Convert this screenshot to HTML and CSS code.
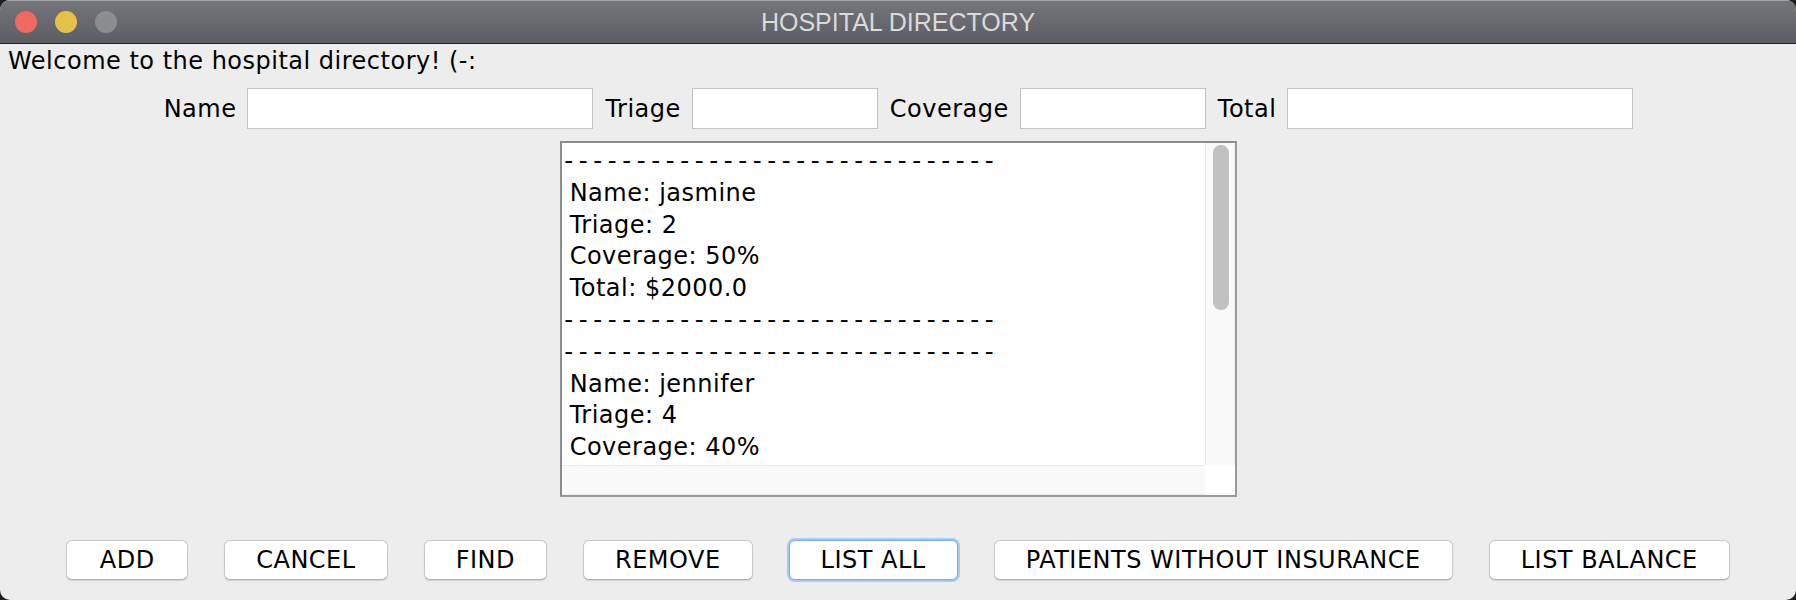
FILE: index.html
```html
<!DOCTYPE html>
<html>
<head>
<meta charset="utf-8">
<title>HOSPITAL DIRECTORY</title>
<link rel="stylesheet" href="styles.css">
</head>
<body>
<div class="window">
  <div class="titlebar">
    <div class="lights">
      <span class="light red"></span>
      <span class="light yellow"></span>
      <span class="light grey"></span>
    </div>
    <div class="title">HOSPITAL DIRECTORY</div>
  </div>
  <div class="content">
    <div class="welcome">Welcome to the hospital directory! (-:</div>
    <div class="fields">
      <span class="label">Name</span><span class="field wide"></span>
      <span class="label">Triage</span><span class="field narrow"></span>
      <span class="label">Coverage</span><span class="field narrow"></span>
      <span class="label">Total</span><span class="field wide"></span>
    </div>
    <div class="areawrap">
      <div class="textarea">
        <div class="viewport">
          <div class="line dash">------------------------------</div>
          <div class="line"> Name: jasmine</div>
          <div class="line"> Triage: 2</div>
          <div class="line"> Coverage: 50%</div>
          <div class="line"> Total: $2000.0</div>
          <div class="line dash">------------------------------</div>
          <div class="line dash">------------------------------</div>
          <div class="line"> Name: jennifer</div>
          <div class="line"> Triage: 4</div>
          <div class="line"> Coverage: 40%</div>
        </div>
        <div class="vscroll"><div class="thumb"></div></div>
        <div class="hscroll"></div>
        <div class="corner"></div>
      </div>
    </div>
    <div class="buttons">
      <button class="btn">ADD</button>
      <button class="btn">CANCEL</button>
      <button class="btn">FIND</button>
      <button class="btn">REMOVE</button>
      <button class="btn focused">LIST ALL</button>
      <button class="btn">PATIENTS WITHOUT INSURANCE</button>
      <button class="btn">LIST BALANCE</button>
    </div>
  </div>
</div>
</body>
</html>
```
FILE: styles.css
```css
html, body {
  margin: 0;
  padding: 0;
  background: #1f1f1f;
}
.window {
  width: 1796px;
  height: 600px;
  background: #ededed;
  border-radius: 10px;
  overflow: hidden;
  display: flex;
  flex-direction: column;
  font-family: "DejaVu Sans", sans-serif;
  font-size: 24px;
  letter-spacing: 0.5px;
  color: #000;
}
.titlebar {
  flex: none;
  background: linear-gradient(#74767b, #5b5d62);
  border-top: 1px solid #9fa1a5;
  border-bottom: 1px solid #1e1e1e;
  box-sizing: border-box;
  height: 44px;
  display: flex;
  align-items: center;
  justify-content: center;
  position: relative;
}
.lights {
  position: absolute;
  left: 15px;
  top: 10px;
  display: flex;
  gap: 18px;
}
.light {
  width: 22px;
  height: 22px;
  border-radius: 50%;
  display: block;
}
.red { background: #ee6a5f; }
.yellow { background: #e5c04b; }
.grey { background: #8b8d91; }
.title {
  font-family: "Liberation Sans", Arial, sans-serif;
  font-size: 25px;
  color: #dadada;
  letter-spacing: 0;
}
.content {
  flex: 1;
  display: flex;
  flex-direction: column;
}
.welcome {
  margin-top: 3px;
  padding-left: 8px;
  line-height: 28px;
  white-space: pre;
}
.fields {
  margin-top: 13px;
  display: flex;
  justify-content: center;
  align-items: center;
  gap: 11px;
}
.label {
  margin-left: 1px;
}
.field {
  height: 41px;
  box-sizing: border-box;
  background: #fff;
  border: 1px solid #c3c3c3;
  display: block;
}
.wide { width: 346px; }
.narrow { width: 186px; }
.areawrap {
  margin-top: 12px;
  display: flex;
  justify-content: center;
}
.textarea {
  width: 677px;
  height: 356px;
  box-sizing: border-box;
  border: 2px solid #8c8c8c;
  border-right-color: #9a9a9a;
  border-bottom-color: #9a9a9a;
  background: #fff;
  display: grid;
  grid-template-columns: 1fr 30px;
  grid-template-rows: 1fr 30px;
}
.viewport {
  overflow: hidden;
  padding: 3px 0 0 0;
}
.line {
  line-height: 31.8px;
  white-space: pre;
}
.line.dash {
  font-family: "Liberation Mono", monospace;
  letter-spacing: 0.1px;
}
.vscroll {
  background: #f9f9f9;
  border-left: 1px solid #e6e6e6;
  border-right: 1px solid #ededed;
  padding: 2px 0 0 7px;
}
.thumb {
  width: 16px;
  height: 165px;
  background: #c1c1c1;
  border-radius: 8px;
}
.hscroll {
  background: #f9f9f9;
  border-top: 1px solid #ebebeb;
  border-bottom: 1px solid #ebebeb;
}
.corner {
  background: #fff;
}
.buttons {
  margin-top: 43px;
  display: flex;
  justify-content: center;
  gap: 36px;
}
.btn {
  font-family: "DejaVu Sans", sans-serif;
  font-size: 24px;
  letter-spacing: 0.5px;
  height: 40px;
  min-width: 122px;
  padding: 0 31px;
  background: #fff;
  border: 1px solid #c8c8c8;
  border-bottom-color: #b3b3b3;
  border-radius: 6px;
  box-shadow: 0 1px 1px rgba(0,0,0,0.12);
  color: #000;
}
.btn.focused {
  border: 1px solid #7aaaf0;
  box-shadow: 0 0 0 2px #a9c9f5;
}
```
